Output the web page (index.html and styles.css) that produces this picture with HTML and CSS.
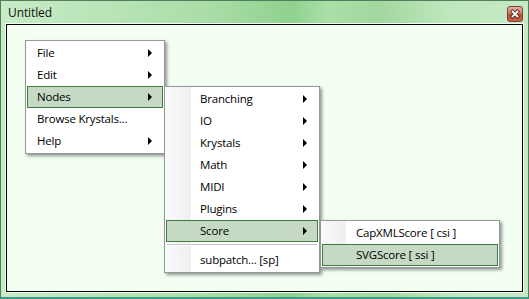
FILE: index.html
```html
<!DOCTYPE html>
<html>
<head>
<meta charset="utf-8">
<link rel="stylesheet" href="styles.css">
</head>
<body>
<div class="window">
  <div class="titlebar">
    <span class="title">Untitled</span>
    <span class="close">
      <svg width="16" height="16" viewBox="0 0 16 16">
        <defs>
          <linearGradient id="cg" x1="0" y1="0" x2="0" y2="1">
            <stop offset="0" stop-color="#eab3a3"/>
            <stop offset="0.45" stop-color="#d9806a"/>
            <stop offset="0.5" stop-color="#c0492c"/>
            <stop offset="1" stop-color="#d4603e"/>
          </linearGradient>
        </defs>
        <rect x="0.5" y="0.5" width="15" height="15" rx="2.5" fill="url(#cg)" stroke="#6e4a44"/>
        <path d="M5.5 5.5 L10.5 10.5 M10.5 5.5 L5.5 10.5" stroke="#3a2a28" stroke-width="3.6" stroke-linecap="square"/>
        <path d="M5.5 5.5 L10.5 10.5 M10.5 5.5 L5.5 10.5" stroke="#ffffff" stroke-width="1.9" stroke-linecap="square"/>
      </svg>
    </span>
  </div>
  <div class="client">
    <div class="menu main-menu">
      <div class="item"><span>File</span><i class="arrow"></i></div>
      <div class="item"><span>Edit</span><i class="arrow"></i></div>
      <div class="item active"><span>Nodes</span><i class="arrow"></i></div>
      <div class="item"><span>Browse Krystals...</span></div>
      <div class="item"><span>Help</span><i class="arrow"></i></div>
    </div>
    <div class="menu sub-menu nodes-menu">
      <div class="item"><span>Branching</span><i class="arrow"></i></div>
      <div class="item"><span>IO</span><i class="arrow"></i></div>
      <div class="item"><span>Krystals</span><i class="arrow"></i></div>
      <div class="item"><span>Math</span><i class="arrow"></i></div>
      <div class="item"><span>MIDI</span><i class="arrow"></i></div>
      <div class="item"><span>Plugins</span><i class="arrow"></i></div>
      <div class="item active"><span>Score</span><i class="arrow"></i></div>
      <div class="separator"></div>
      <div class="item"><span>subpatch... [sp]</span></div>
    </div>
    <div class="menu sub-menu score-menu">
      <div class="item"><span>CapXMLScore [ csi ]</span></div>
      <div class="item active"><span>SVGScore [ ssi ]</span></div>
    </div>
  </div>
</div>
</body>
</html>
```
FILE: styles.css
```css
html, body {
  margin: 0;
  padding: 0;
  background: #ffffff;
}

body {
  font-family: "Open Sans", "Noto Sans", sans-serif;
  font-size: 11.5px;
  letter-spacing: -0.2px;
  color: #000;
}

.window {
  width: 529px;
  height: 299px;
  box-sizing: border-box;
  display: flex;
  flex-direction: column;
  padding: 0 5px 5px 5px;
  border: 1px solid #4f7f5c;
  border-bottom: 2px solid #3f9c88;
  background: linear-gradient(90deg, #c8ebc6 0%, #b9e4b7 20%, #a9dda7 40%, #90d18e 55%, #aadfa8 62%, #a2d7a0 72%, #bfe7bd 85%, #c6eac4 100%);
}

.titlebar {
  height: 23px;
  display: flex;
  align-items: center;
  justify-content: space-between;
  padding: 0 0 0 2px;
}

.title {
  font-size: 12px;
  letter-spacing: -0.1px;
  color: #111;
  line-height: 1;
  margin-top: 1px;
}

.close {
  display: flex;
  margin-top: 2px;
  margin-right: 0;
}

.client {
  flex: 1;
  position: relative;
  background: #f1fef1;
  border: 1px solid #000;
  box-shadow: 0 0 0 1px #f4fff4;
}

.menu {
  position: absolute;
  box-sizing: border-box;
  background: #ffffff;
  border: 1px solid #979797;
  padding: 1px;
  box-shadow: 2px 2px 3px rgba(0, 0, 0, 0.4);
}

.main-menu {
  left: 18px;
  top: 15px;
  width: 140px;
}

.nodes-menu {
  left: 157px;
  top: 61px;
  width: 156px;
  background: linear-gradient(90deg, #fbfbfb 0px, #efefef 25px, #e2e2e2 25px, #ffffff 26px, #ffffff 100%);
}

.score-menu {
  left: 313px;
  top: 195px;
  width: 180px;
  background: linear-gradient(90deg, #fbfbfb 0px, #efefef 24px, #e2e2e2 24px, #ffffff 25px, #ffffff 100%);
}

.item {
  height: 22px;
  box-sizing: border-box;
  display: flex;
  align-items: center;
  justify-content: space-between;
  padding: 0 10px 0 9px;
  border: 1px solid transparent;
  line-height: 1;
}

.item span {
  padding-bottom: 1px;
}

.sub-menu .item {
  padding-left: 33px;
}

.item.active {
  background: #c5d9c5;
  border-color: #3e7d3e;
}

.arrow {
  width: 0;
  height: 0;
  border-left: 4px solid #000;
  border-top: 4px solid transparent;
  border-bottom: 4px solid transparent;
}

.separator {
  height: 1px;
  margin: 2px 1px 3px 1px;
  background: #c8c8c8;
  border-bottom: 1px solid #ffffff;
}
```
